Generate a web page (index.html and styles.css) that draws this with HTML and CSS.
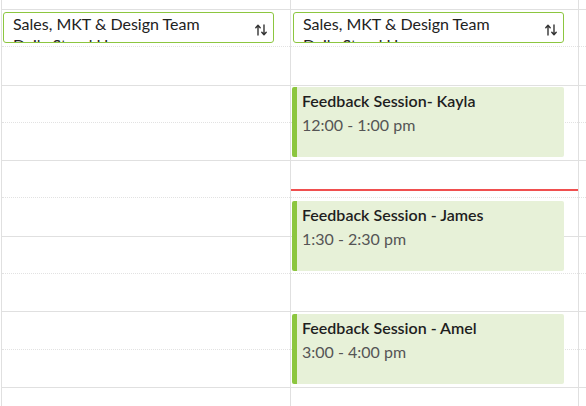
FILE: index.html
```html
<!DOCTYPE html>
<html>
<head>
<meta charset="utf-8">
<link rel="stylesheet" href="styles.css">
</head>
<body>
<div class="calendar">
  <div class="day day-a">
    <div class="slots">
      <div class="lead"></div>
      <div class="slot"><div class="half"></div></div>
      <div class="slot"><div class="half"></div></div>
      <div class="slot"><div class="half"></div></div>
      <div class="slot"><div class="half"></div></div>
      <div class="slot"><div class="half"></div></div>
      <div class="slot"><div class="half"></div></div>
    </div>
    <div class="picker picker-a">
      <span class="picker-text">Sales, MKT &amp; Design Team Daily Stand Up</span>
      <svg class="swap" viewBox="0 0 12 12" width="12" height="12"><path d="M3 11V1.5M0.8 3.8L3 1.3 5.2 3.8M9 1v9.5M6.8 8.2L9 10.7 11.2 8.2" fill="none" stroke="#333" stroke-width="1.4" stroke-linecap="round" stroke-linejoin="round"/></svg>
    </div>
  </div>
  <div class="day day-b">
    <div class="slots">
      <div class="lead"></div>
      <div class="slot"><div class="half"></div></div>
      <div class="slot"><div class="half"></div></div>
      <div class="slot"><div class="half"></div></div>
      <div class="slot"><div class="half"></div></div>
      <div class="slot"><div class="half"></div></div>
      <div class="slot"><div class="half"></div></div>
    </div>
    <div class="picker picker-b">
      <span class="picker-text">Sales, MKT &amp; Design Team Daily Stand Up</span>
      <svg class="swap" viewBox="0 0 12 12" width="12" height="12"><path d="M3 11V1.5M0.8 3.8L3 1.3 5.2 3.8M9 1v9.5M6.8 8.2L9 10.7 11.2 8.2" fill="none" stroke="#333" stroke-width="1.4" stroke-linecap="round" stroke-linejoin="round"/></svg>
    </div>
    <div class="event" style="top:87px;height:70px">
      <div class="event-title">Feedback Session- Kayla</div>
      <div class="event-time">12:00 - 1:00 pm</div>
    </div>
    <div class="now" style="top:189px"></div>
    <div class="event" style="top:201px;height:70px">
      <div class="event-title">Feedback Session - James</div>
      <div class="event-time">1:30 - 2:30 pm</div>
    </div>
    <div class="event" style="top:314px;height:70px">
      <div class="event-title">Feedback Session - Amel</div>
      <div class="event-time">3:00 - 4:00 pm</div>
    </div>
  </div>
  <div class="day day-c">
    <div class="slots">
      <div class="lead"></div>
      <div class="slot"><div class="half"></div></div>
      <div class="slot"><div class="half"></div></div>
      <div class="slot"><div class="half"></div></div>
      <div class="slot"><div class="half"></div></div>
      <div class="slot"><div class="half"></div></div>
      <div class="slot"><div class="half"></div></div>
    </div>
  </div>
</div>
</body>
</html>
```
FILE: styles.css
```css
html, body {
  margin: 0;
  padding: 0;
  background: #fff;
  overflow: hidden;
}
body {
  font-family: Lato, "Noto Sans", sans-serif;
  color: #222;
  height: 406px;
}
.calendar {
  display: grid;
  grid-template-columns: 289px 288px 1fr;
  padding-left: 1px;
  height: 406px;
  overflow: hidden;
}
.day {
  position: relative;
  border-left: 1px solid #e0e0e0;
  overflow: hidden;
}
.slots {
  display: flex;
  flex-direction: column;
}
.lead {
  height: 9px;
  flex: none;
}
.slot {
  height: 75.6px;
  flex: none;
  box-sizing: border-box;
  border-top: 1px solid #e0e0e0;
}
.half {
  height: 50%;
  border-bottom: 1px dotted #e2e2e2;
  box-sizing: border-box;
}
.picker {
  position: absolute;
  top: 12px;
  width: 271px;
  height: 31px;
  box-sizing: border-box;
  border: 1px solid #8cc63f;
  border-radius: 3px;
  background: #fff;
  overflow: hidden;
  display: flex;
  align-items: flex-start;
  padding: 0 6px 0 9px;
}
.picker-a { left: 1px; }
.picker-b { left: 2px; }
.picker-text {
  flex: 1;
  width: 200px;
  font-size: 16px;
  line-height: 21px;
  color: #222;
  padding-right: 40px;
}
.swap {
  flex: none;
  margin-top: 11px;
}
.event {
  position: absolute;
  left: 1px;
  width: 272px;
  box-sizing: border-box;
  background: #e7f1d8;
  border-left: 5px solid #8cc63f;
  border-radius: 2px;
  padding: 3px 8px 0 5px;
}
.event-title {
  font-size: 16px;
  font-weight: 600;
  line-height: 22px;
  color: #1e1e1e;
}
.event-time {
  font-size: 16px;
  line-height: 22px;
  margin-top: 2px;
  color: #555;
}
.now {
  position: absolute;
  left: 0;
  right: 0;
  height: 2px;
  background: #f04f4f;
}
```
